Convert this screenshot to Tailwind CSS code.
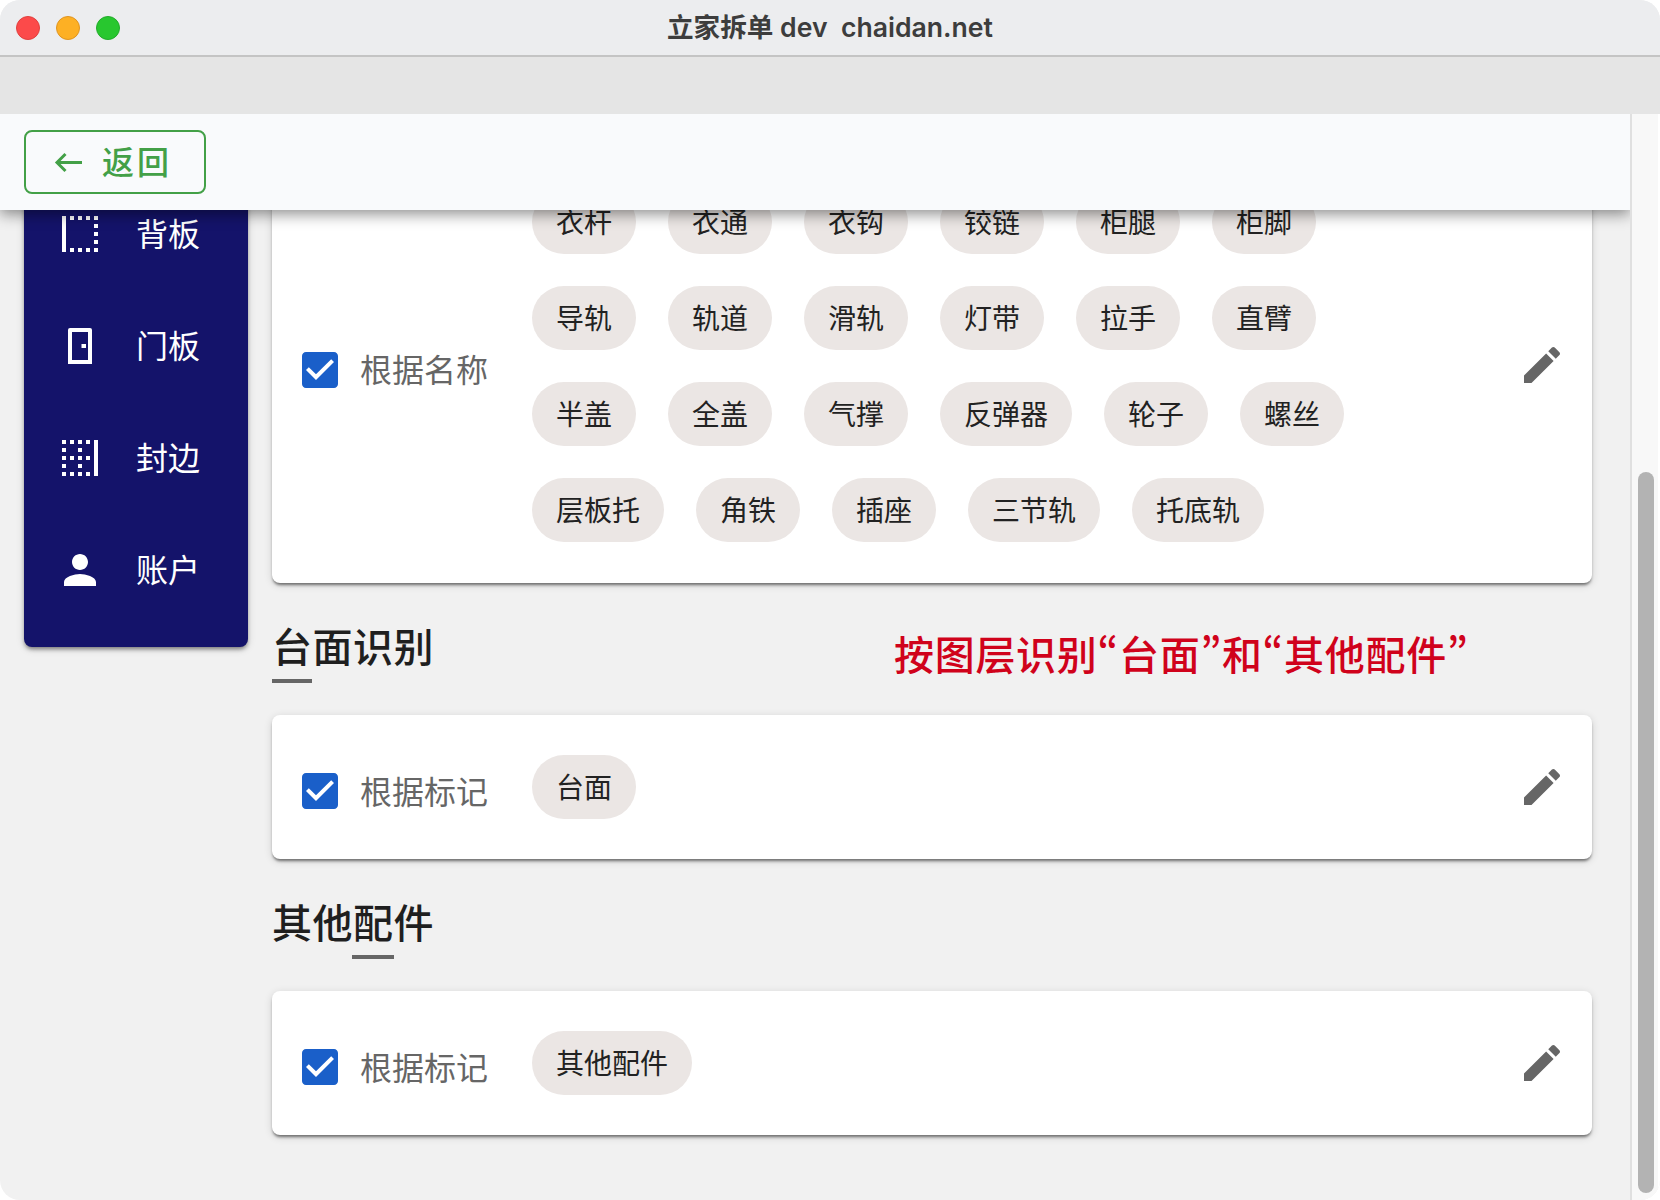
<!DOCTYPE html>
<html lang="zh">
<head>
  <meta charset="UTF-8" />
  <title>立家拆单 dev chaidan.net</title>
  <script src="https://cdn.jsdelivr.net/npm/@tailwindcss/browser@4"></script>
</head>
<body class="bg-white font-['Roboto','Noto_Sans_CJK_SC',sans-serif]">
  <div class="w-[1660px] h-[1200px] rounded-[20px] overflow-hidden flex flex-col bg-[#f1f1f1]">
    <!-- Title bar -->
    <div class="h-[57px] shrink-0 grid grid-cols-[1fr_auto_1fr] items-center bg-[#ecedef] border-b-2 border-[#c4c4c4]">
      <div class="flex gap-4 pl-4">
        <span class="w-6 h-6 rounded-full bg-[#fc4a4a] border border-[#e0403e]"></span>
        <span class="w-6 h-6 rounded-full bg-[#fdb024] border border-[#df9420]"></span>
        <span class="w-6 h-6 rounded-full bg-[#28c72f] border border-[#22ab2b]"></span>
      </div>
      <div class="text-[26.6px] font-semibold text-[#3d3d3d] whitespace-pre font-['Inter','Noto_Sans_CJK_SC',sans-serif]">立家拆单 dev  chaidan.net</div>
      <div></div>
    </div>
    <div class="h-[57px] shrink-0 bg-[#e5e5e5]"></div>

    <div class="flex-1 flex min-h-0">
      <!-- Scrolled area -->
      <div class="relative w-[1630px] shrink-0 overflow-hidden">
        <!-- Sticky back header -->
        <div class="absolute top-0 left-0 right-0 z-10 h-[96px] py-4 pl-6 bg-[#f9fafc] shadow-[0_4px_14px_rgba(0,0,0,0.45)]">
          <button class="h-16 w-[182px] flex items-center pl-[22px] gap-[14px] border-2 border-[#43a047] rounded-lg text-[#43a047] text-[32px] font-medium tracking-[3px]">
            <svg width="40" height="40" viewBox="0 0 40 40" fill="none" stroke="#43a047" stroke-width="3"><path d="M34 20.5H9M17.5 12L9 20.5l8.5 8.5"/></svg>
            <span class="pt-[2px]">返回</span>
          </button>
        </div>

        <div class="flex">
          <!-- Sidebar -->
          <div class="ml-6 w-[224px] h-[533px] pt-16 bg-[#14136a] rounded-lg shadow-[0_3px_4px_-1px_rgba(0,0,0,0.45),0_2px_8px_rgba(0,0,0,0.14)] text-white text-[32px]">
            <div class="h-[112px] flex items-center pl-8 gap-8">
              <svg width="48" height="48" viewBox="0 0 48 48" fill="#fff"><path d="M6 6h4v36H6zM14 6h4v4h-4zM22 6h4v4h-4zM30 6h4v4h-4zM38 6h4v4h-4zM38 14h4v4h-4zM38 22h4v4h-4zM38 30h4v4h-4zM14 38h4v4h-4zM22 38h4v4h-4zM30 38h4v4h-4zM38 38h4v4h-4z"/></svg>
              <span class="pt-[2px]">背板</span>
            </div>
            <div class="h-[112px] flex items-center pl-8 gap-8">
              <svg width="48" height="48" viewBox="0 0 48 48" fill="#fff"><path fill-rule="evenodd" d="M12 42V8a2 2 0 0 1 2-2h20a2 2 0 0 1 2 2v34zM16 38h16V10H16zM25.500 22h4.500v4h-4.500z"/></svg>
              <span class="pt-[2px]">门板</span>
            </div>
            <div class="h-[112px] flex items-center pl-8 gap-8">
              <svg width="48" height="48" viewBox="0 0 24 24" fill="#fff"><path d="M7 21h2v-2H7v2zM3 5h2V3H3v2zm4 0h2V3H7v2zm0 8h2v-2H7v2zm-4 8h2v-2H3v2zm8 0h2v-2h-2v2zm-8-4h2v-2H3v2zm0-4h2v-2H3v2zm0-4h2V7H3v2zm8 8h2v-2h-2v2zm4-4h2v-2h-2v2zm4-10v18h2V3h-2zm-4 18h2v-2h-2v2zm0-16h2V3h-2v2zm-4 8h2v-2h-2v2zm0-8h2V3h-2v2zm0 4h2V7h-2v2z"/></svg>
              <span class="pt-[2px]">封边</span>
            </div>
            <div class="h-[112px] flex items-center pl-8 gap-8">
              <svg width="48" height="48" viewBox="0 0 24 24" fill="#fff"><path d="M12 12c2.210 0 4-1.790 4-4s-1.790-4-4-4-4 1.790-4 4 1.790 4 4 4zm0 2c-2.670 0-8 1.340-8 4v2h16v-2c0-2.660-5.330-4-8-4z"/></svg>
              <span class="pt-[2px]">账户</span>
            </div>
          </div>

          <!-- Main column -->
          <div class="ml-6 w-[1320px]">
            <!-- 名称 card -->
            <div class="mt-8 pt-[44px] pb-[41px] pl-6 pr-[26px] flex items-center bg-white rounded-lg shadow-[0_3px_3px_-1px_rgba(0,0,0,0.5),0_2px_8px_rgba(0,0,0,0.14)]">
              <div class="mt-2 flex items-center gap-4 text-[32px] text-[#666]">
                <svg width="48" height="48" viewBox="0 0 24 24" fill="#1a5fc9"><path d="M19 3H5c-1.110 0-2 .9-2 2v14c0 1.100.89 2 2 2h14c1.110 0 2-.9 2-2V5c0-1.100-.89-2-2-2zm-9 14l-5-5 1.410-1.410L10 14.170l7.590-7.590L19 8l-9 9z"/></svg>
                <span class="pt-[2px]">根据名称</span>
              </div>
              <div class="ml-11 w-[850px] flex flex-wrap gap-8 text-[28px] text-[#222]">
                <span class="h-16 px-6 pt-[3px] flex items-center rounded-full bg-[#ebe6e4]">衣杆</span>
                <span class="h-16 px-6 pt-[3px] flex items-center rounded-full bg-[#ebe6e4]">衣通</span>
                <span class="h-16 px-6 pt-[3px] flex items-center rounded-full bg-[#ebe6e4]">衣钩</span>
                <span class="h-16 px-6 pt-[3px] flex items-center rounded-full bg-[#ebe6e4]">铰链</span>
                <span class="h-16 px-6 pt-[3px] flex items-center rounded-full bg-[#ebe6e4]">柜腿</span>
                <span class="h-16 px-6 pt-[3px] flex items-center rounded-full bg-[#ebe6e4]">柜脚</span>
                <span class="h-16 px-6 pt-[3px] flex items-center rounded-full bg-[#ebe6e4]">导轨</span>
                <span class="h-16 px-6 pt-[3px] flex items-center rounded-full bg-[#ebe6e4]">轨道</span>
                <span class="h-16 px-6 pt-[3px] flex items-center rounded-full bg-[#ebe6e4]">滑轨</span>
                <span class="h-16 px-6 pt-[3px] flex items-center rounded-full bg-[#ebe6e4]">灯带</span>
                <span class="h-16 px-6 pt-[3px] flex items-center rounded-full bg-[#ebe6e4]">拉手</span>
                <span class="h-16 px-6 pt-[3px] flex items-center rounded-full bg-[#ebe6e4]">直臂</span>
                <span class="h-16 px-6 pt-[3px] flex items-center rounded-full bg-[#ebe6e4]">半盖</span>
                <span class="h-16 px-6 pt-[3px] flex items-center rounded-full bg-[#ebe6e4]">全盖</span>
                <span class="h-16 px-6 pt-[3px] flex items-center rounded-full bg-[#ebe6e4]">气撑</span>
                <span class="h-16 px-6 pt-[3px] flex items-center rounded-full bg-[#ebe6e4]">反弹器</span>
                <span class="h-16 px-6 pt-[3px] flex items-center rounded-full bg-[#ebe6e4]">轮子</span>
                <span class="h-16 px-6 pt-[3px] flex items-center rounded-full bg-[#ebe6e4]">螺丝</span>
                <span class="h-16 px-6 pt-[3px] flex items-center rounded-full bg-[#ebe6e4]">层板托</span>
                <span class="h-16 px-6 pt-[3px] flex items-center rounded-full bg-[#ebe6e4]">角铁</span>
                <span class="h-16 px-6 pt-[3px] flex items-center rounded-full bg-[#ebe6e4]">插座</span>
                <span class="h-16 px-6 pt-[3px] flex items-center rounded-full bg-[#ebe6e4]">三节轨</span>
                <span class="h-16 px-6 pt-[3px] flex items-center rounded-full bg-[#ebe6e4]">托底轨</span>
              </div>
              <svg class="ml-auto -mt-[2px]" width="48" height="48" viewBox="0 0 24 24" fill="#666"><path d="M3 17.250V21h3.750L17.810 9.940l-3.750-3.750L3 17.250zM20.710 7.040c.39-.39.39-1.020 0-1.410l-2.340-2.340c-.39-.39-1.020-.39-1.410 0l-1.830 1.830 3.750 3.750 1.830-1.830z"/></svg>
            </div>

            <!-- 台面识别 -->
            <div class="mt-10 flex h-12 leading-[48px]">
              <h2 class="pt-[2px] text-[40px] font-medium tracking-[0.5px] text-[#1f1f1f]">台面识别</h2>
              <span class="ml-[460px] mt-[6px] text-[40px] font-medium tracking-[0.7px] text-[#d0021b] [font-feature-settings:'pwid'] font-['Noto_Sans_CJK_SC',sans-serif]">按图层识别“台面”和“其他配件”</span>
            </div>
            <div class="mt-2 w-10 h-1 bg-[#666]"></div>
            <div class="mt-8 py-10 pl-6 pr-[26px] flex items-center bg-white rounded-lg shadow-[0_3px_3px_-1px_rgba(0,0,0,0.5),0_2px_8px_rgba(0,0,0,0.14)]">
              <div class="mt-2 flex items-center gap-4 text-[32px] text-[#666]">
                <svg width="48" height="48" viewBox="0 0 24 24" fill="#1a5fc9"><path d="M19 3H5c-1.110 0-2 .9-2 2v14c0 1.100.89 2 2 2h14c1.110 0 2-.9 2-2V5c0-1.100-.89-2-2-2zm-9 14l-5-5 1.410-1.410L10 14.170l7.590-7.590L19 8l-9 9z"/></svg>
                <span class="pt-1">根据标记</span>
              </div>
              <span class="ml-11 h-16 px-6 pt-1 flex items-center rounded-full bg-[#ebe6e4] text-[28px] text-[#222]">台面</span>
              <svg class="ml-auto" width="48" height="48" viewBox="0 0 24 24" fill="#666"><path d="M3 17.250V21h3.750L17.810 9.940l-3.750-3.750L3 17.250zM20.710 7.040c.39-.39.39-1.020 0-1.410l-2.340-2.340c-.39-.39-1.020-.39-1.410 0l-1.830 1.830 3.750 3.750 1.830-1.830z"/></svg>
            </div>

            <!-- 其他配件 -->
            <h2 class="mt-10 h-12 pt-[2px] leading-[48px] text-[40px] font-medium tracking-[0.5px] text-[#1f1f1f]">其他配件</h2>
            <div class="mt-2 ml-20 w-[42px] h-1 bg-[#666]"></div>
            <div class="mt-8 py-10 pl-6 pr-[26px] flex items-center bg-white rounded-lg shadow-[0_3px_3px_-1px_rgba(0,0,0,0.5),0_2px_8px_rgba(0,0,0,0.14)]">
              <div class="mt-2 flex items-center gap-4 text-[32px] text-[#666]">
                <svg width="48" height="48" viewBox="0 0 24 24" fill="#1a5fc9"><path d="M19 3H5c-1.110 0-2 .9-2 2v14c0 1.100.89 2 2 2h14c1.110 0 2-.9 2-2V5c0-1.100-.89-2-2-2zm-9 14l-5-5 1.410-1.410L10 14.170l7.590-7.590L19 8l-9 9z"/></svg>
                <span class="pt-1">根据标记</span>
              </div>
              <span class="ml-11 h-16 px-6 pt-1 flex items-center rounded-full bg-[#ebe6e4] text-[28px] text-[#222]">其他配件</span>
              <svg class="ml-auto" width="48" height="48" viewBox="0 0 24 24" fill="#666"><path d="M3 17.250V21h3.750L17.810 9.940l-3.750-3.750L3 17.250zM20.710 7.040c.39-.39.39-1.020 0-1.410l-2.340-2.340c-.39-.39-1.020-.39-1.410 0l-1.830 1.830 3.750 3.750 1.830-1.830z"/></svg>
            </div>
          </div>
        </div>
      </div>

      <!-- Scrollbar -->
      <div class="w-7 shrink-0 bg-[#f8f8f8] border-l-2 border-[#e0e0e0] pl-[6px] pt-[358px] pb-[7px]">
        <div class="w-4 h-full rounded-full bg-[#b3b3b3]"></div>
      </div>
      <div class="w-[2px] shrink-0 bg-white"></div>
    </div>
  </div>
</body>
</html>
